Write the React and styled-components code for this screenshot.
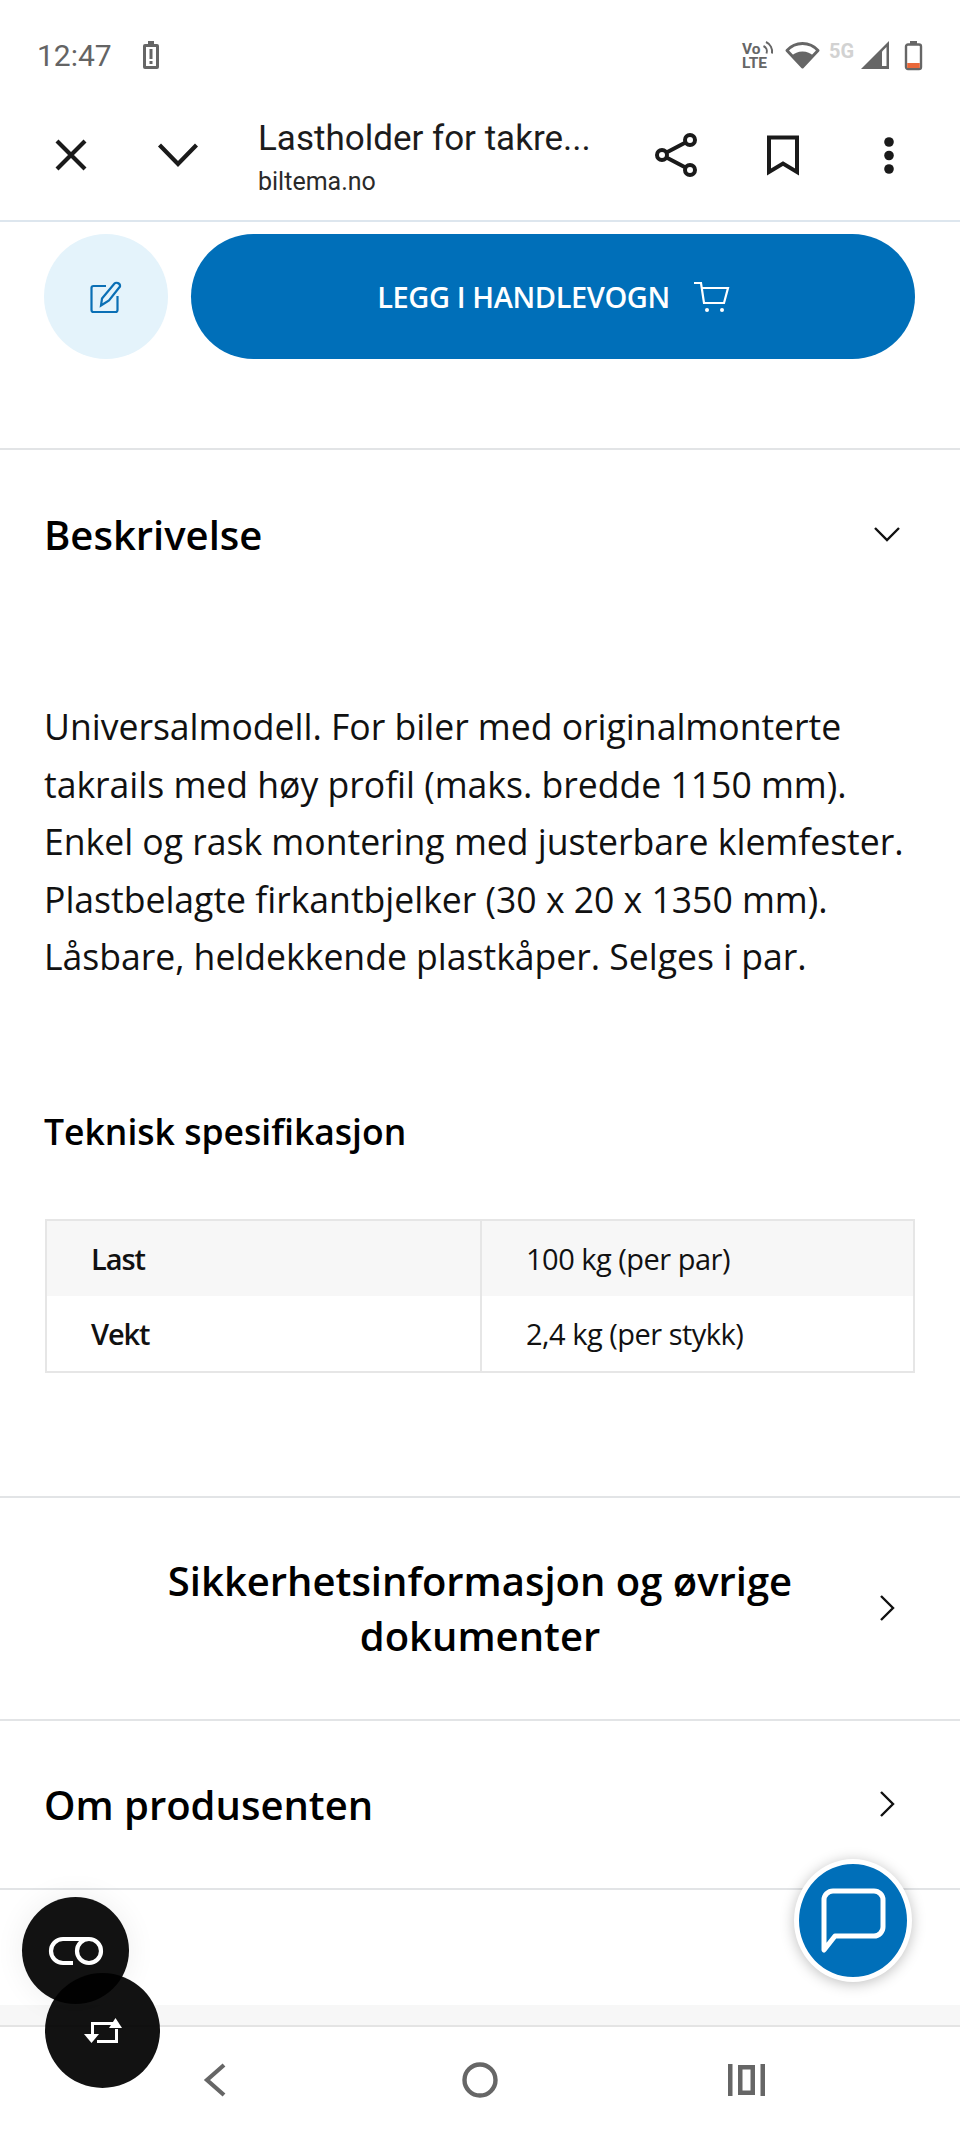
import React from "react";
import styled, { createGlobalStyle } from "styled-components";

const Global = createGlobalStyle`
  html, body { margin: 0; padding: 0; background: #fff; }
  body { width: 960px; height: 2133px; overflow: hidden; }
  * { box-sizing: border-box; }
  svg { display: block; overflow: visible; }
`;

const Phone = styled.div`
  position: relative;
  width: 960px;
  height: 2133px;
  overflow: hidden;
  background: #fff;
  display: flex;
  flex-direction: column;
  font-family: "Open Sans", "Noto Sans", sans-serif;
  color: #000;
`;

const StatusBar = styled.div`
  height: 108px;
  flex: none;
  padding: 41px 38px 0 37px;
  display: flex;
  justify-content: space-between;
  align-items: flex-start;
`;
const StatusGroup = styled.div`
  display: flex;
  align-items: flex-start;
`;
const StatusItem = styled.div`
  flex: none;
  margin-left: ${p => p.$ml || 0}px;
  margin-top: ${p => p.$mt || 0}px;
`;
const Clock = styled.span`
  font: 400 30px/30px Roboto, sans-serif;
  color: #646464;
`;
const FiveG = styled.span`
  display: block;
  width: 26px;
  font: 700 20px/18px Roboto, sans-serif;
  color: #d2d2d2;
  white-space: nowrap;
`;
const Toolbar = styled.div`
  height: 114px;
  flex: none;
  display: flex;
  align-items: center;
  padding-bottom: 18px;
  border-bottom: 2px solid #dde6ee;
`;
const ToolSlot = styled.div`
  flex: none;
  width: ${p => p.$w}px;
  display: flex;
  justify-content: center;
`;
const TitleBlock = styled.div`
  flex: none;
  width: 375px;
  display: flex;
  flex-direction: column;
  gap: 7px;
  margin-top: 4px;
`;
const Title = styled.div`
  font: 400 35px/42px Roboto, sans-serif;
  color: #1c1c1c;
  white-space: nowrap;
`;
const Url = styled.div`
  font: 400 25px/30px Roboto, sans-serif;
  color: #2a2a2a;
`;
const ActionRow = styled.div`
  flex: none;
  display: flex;
  gap: 23px;
  padding: 12px 45px 89px 44px;
`;
const EditButton = styled.div`
  width: 124px;
  height: 125px;
  flex: none;
  border-radius: 50%;
  background: #e4f3fb;
  display: flex;
  align-items: center;
  justify-content: center;
`;
const CartButton = styled.div`
  flex: 1;
  height: 125px;
  border-radius: 63px;
  background: #006fb9;
  display: flex;
  align-items: center;
  justify-content: center;
  gap: 24px;
  color: #fff;
  font-weight: 600;
  font-size: 29px;
  letter-spacing: -0.4px;
`;
const Rule = styled.div`
  height: 2px;
  flex: none;
  background: #e2e4e6;
`;
const SectionHead = styled.div`
  flex: none;
  height: ${p => p.$h}px;
  padding: 0 60px 0 44px;
  display: flex;
  align-items: center;
  gap: 20px;
`;
const HeadText = styled.h2`
  margin: 0 0 0 ${p => (p.$center ? 62 : 0)}px;
  flex: 1;
  font-size: 40px;
  line-height: 55px;
  font-weight: 600;
  text-align: ${p => (p.$center ? "center" : "left")};
`;
const Chevron = styled.svg`
  flex: none;
  width: 26px;
  height: 26px;
  fill: none;
  stroke: #111;
  stroke-width: 2.4;
`;
const Description = styled.p`
  margin: 80px 0 0;
  padding: 0 44px;
  flex: none;
  font-size: 35.6px;
  line-height: 57.6px;
  letter-spacing: -0.02px;
  color: #111;
  white-space: nowrap;
`;
const SpecTitle = styled.h3`
  margin: 116px 0 0;
  padding: 0 44px;
  flex: none;
  font-size: 35.5px;
  line-height: 58px;
  font-weight: 600;
`;
const Table = styled.div`
  flex: none;
  margin: 59px 45px 0;
  border: 2px solid #e6e6e6;
  display: grid;
  grid-template-columns: 433px 1fr;
`;
const Cell = styled.div`
  height: 75px;
  display: flex;
  align-items: center;
  padding-left: 44px;
  background: ${p => (p.$shade ? "#f7f7f7" : "#fff")};
  border-left: ${p => (p.$value ? "2px solid #e6e6e6" : "none")};
  font-size: 29px;
  font-weight: ${p => (p.$value ? 400 : 600)};
  letter-spacing: ${p => (p.$value ? -0.5 : -1.1)}px;
  color: #111;
`;
const Spacer = styled.div`
  flex: none;
  height: ${p => p.$h}px;
`;
const Band = styled.div`
  flex: none;
  height: 22px;
  background: #f7f7f7;
  border-bottom: 2px solid #e4e4e4;
`;
const NavBar = styled.div`
  flex: 1;
  display: flex;
  align-items: center;
  justify-content: center;
`;
const NavSlot = styled.div`
  flex: none;
  width: 266px;
  display: flex;
  justify-content: center;
`;
const Fab = styled.div`
  position: absolute;
  left: ${p => p.$left}px;
  top: ${p => p.$top}px;
  width: ${p => p.$size}px;
  height: ${p => p.$size}px;
  border-radius: 50%;
  background: rgba(0, 0, 0, 0.93);
  display: flex;
  align-items: center;
  justify-content: center;
  box-shadow: ${p => (p.$shadow ? "0 0 30px rgba(0,0,0,0.07)" : "none")};
`;
const ChatFab = styled.div`
  position: absolute;
  left: 794px;
  top: 1859px;
  width: 118px;
  height: 123px;
  border-radius: 50%;
  background: #006fb9;
  border: 5px solid #fff;
  box-shadow: 0 2px 14px rgba(0, 0, 0, 0.25);
  display: flex;
  align-items: center;
  justify-content: center;
`;

const ChevronDown = () => (
  <Chevron viewBox="0 0 26 26"><path d="M1 7l12 12L25 7" /></Chevron>
);
const ChevronRight = () => (
  <Chevron viewBox="0 0 26 26"><path d="M7 1l12 12L7 25" /></Chevron>
);

const BatteryAlert = () => (
  <svg width="16" height="28" viewBox="0 0 16 28">
    <rect x="5" y="0" width="6" height="4" fill="#666" />
    <rect x="0" y="3" width="16" height="25" rx="2" fill="#666" />
    <rect x="3" y="6" width="10" height="19" fill="#fff" />
    <rect x="6.5" y="8" width="3" height="10" fill="#666" />
    <rect x="6.5" y="20" width="3" height="3" fill="#666" />
  </svg>
);
const VoLte = () => (
  <svg width="31" height="28" viewBox="0 0 31 28">
    <text x="0" y="13" fontFamily="Roboto, sans-serif" fontWeight="700" fontSize="15.500" fill="#666">Vo</text>
    <text x="0" y="27" fontFamily="Roboto, sans-serif" fontWeight="700" fontSize="15.500" fill="#666">LTE</text>
    <path d="M21.500 5a6 6 0 0 1 3 7.500M24 1a11 11 0 0 1 6 11.500" stroke="#666" strokeWidth="2" fill="none" />
  </svg>
);
const Wifi = () => (
  <svg width="35" height="28" viewBox="0 0 35 28">
    <path d="M17.500 26 2 9.500C6 5 11 2.500 17.500 2.500S29 5 33 9.500Z" fill="none" stroke="#666" strokeWidth="3" strokeLinejoin="round" />
    <path d="M17.500 27 6.500 15c3-3 6.500-4.500 11-4.500s8 1.500 11 4.500Z" fill="#666" />
  </svg>
);
const Signal = () => (
  <svg width="29" height="28" viewBox="0 0 29 28">
    <path d="M0 28 28 0v28Z" fill="#666" />
    <path d="M21 10.500 25.500 6v19H21Z" fill="#fff" />
  </svg>
);
const Battery = () => (
  <svg width="17" height="29" viewBox="0 0 17 29">
    <rect x="5" y="0" width="7" height="4" fill="#666" />
    <rect x="1" y="3.500" width="15" height="24.500" rx="2" fill="#fff" stroke="#666" strokeWidth="2.400" />
    <rect x="2.200" y="22" width="12.600" height="5" fill="#e9683a" />
  </svg>
);
const Close = () => (
  <svg width="32" height="32" viewBox="0 0 32 32" fill="none" stroke="#1a1a1a" strokeWidth="4.200">
    <path d="M2 2l28 28M30 2 2 30" />
  </svg>
);
const CollapseChevron = () => (
  <svg width="40" height="24" viewBox="0 0 40 24" fill="none" stroke="#1a1a1a" strokeWidth="4.200">
    <path d="M1.500 2 20 21 38.500 2" />
  </svg>
);
const Share = () => (
  <svg width="42" height="44" viewBox="0 0 42 44" fill="none" stroke="#1a1a1a" strokeWidth="4">
    <circle cx="35" cy="7" r="5" />
    <circle cx="7" cy="22" r="5" />
    <circle cx="35" cy="37" r="5" />
    <path d="M11.500 19.500 30.500 9.500M11.500 24.500l19 10" />
  </svg>
);
const Bookmark = () => (
  <svg width="32" height="41" viewBox="0 0 32 41" fill="none" stroke="#1a1a1a" strokeWidth="4">
    <path d="M2 2.500h28V37L16 28.500 2 37Z" />
  </svg>
);
const Dots = () => (
  <svg width="10" height="37" viewBox="0 0 10 37" fill="#1a1a1a">
    <circle cx="5" cy="5" r="4.800" />
    <circle cx="5" cy="18.500" r="4.800" />
    <circle cx="5" cy="32" r="4.800" />
  </svg>
);
const EditIcon = () => (
  <svg width="32" height="32" viewBox="0 0 32 32" fill="none" stroke="#0a6fb5" strokeWidth="2.200">
    <path d="M16 5H3.500A2 2 0 0 0 1.500 7v22a2 2 0 0 0 2 2h22a2 2 0 0 0 2-2V15" />
    <path d="M11 24.500l1-7L24.500 2.500c1.500-1.500 6-.5 5.500 3L19 19.500Z" />
  </svg>
);
const CartIcon = () => (
  <svg width="35" height="32" viewBox="0 0 35 32" fill="none" stroke="#fff" strokeWidth="2.200">
    <path d="M0 2h7l3 20h20l4-15H8" />
    <circle cx="13" cy="29" r="2" fill="#fff" stroke="none" />
    <circle cx="28" cy="29" r="2" fill="#fff" stroke="none" />
  </svg>
);
const ToggleIcon = () => (
  <svg width="54" height="28" viewBox="0 0 54 28" fill="none" stroke="#fff" strokeWidth="4.200">
    <path d="M24 26H14a12 12 0 0 1 0-24h26a12 12 0 0 1 0 24 12 12 0 0 1-12-12A12 12 0 0 1 40 2" />
  </svg>
);
const SwapIcon = () => (
  <svg width="38" height="30" viewBox="0 0 38 30" fill="#fff">
    <path d="M7 6h22v3H10v11H7Z" />
    <path d="M0 18h15l-7.500 9Z" />
    <path d="M31 24H13v3h21V13h-3Z" />
    <path d="M25 12h13L31.500 2Z" />
  </svg>
);
const ChatIcon = () => (
  <svg width="64" height="66" viewBox="0 0 64 66" fill="none" stroke="#fff" strokeWidth="5" strokeLinejoin="round">
    <path d="M3 62V12a9 9 0 0 1 9-9h41a9 9 0 0 1 9 9v27a9 9 0 0 1-9 9H14Z" />
  </svg>
);
const NavBack = () => (
  <svg width="22" height="34" viewBox="0 0 22 34" fill="none" stroke="#666" strokeWidth="4.200">
    <path d="M21 2 4 17l17 15" />
  </svg>
);
const NavHome = () => (
  <svg width="36" height="36" viewBox="0 0 36 36" fill="none" stroke="#666" strokeWidth="4.400">
    <circle cx="18" cy="18" r="15.500" />
  </svg>
);
const NavRecent = () => (
  <svg width="37" height="32" viewBox="0 0 37 32" fill="#666">
    <rect x="0" y="0" width="4.500" height="32" />
    <rect x="32.500" y="0" width="4.500" height="32" />
    <path fillRule="evenodd" d="M10 1h17v30H10ZM14.500 5.500v21h8v-21Z" />
  </svg>
);

export default function App() {
  return (
    <Phone>
      <Global />
      <StatusBar>
        <StatusGroup>
          <Clock>12:47</Clock>
          <StatusItem $ml={31}><BatteryAlert /></StatusItem>
        </StatusGroup>
        <StatusGroup>
          <VoLte />
          <StatusItem $ml={12}><Wifi /></StatusItem>
          <StatusItem $ml={9} $mt={1}><FiveG>5G</FiveG></StatusItem>
          <StatusItem $ml={6}><Signal /></StatusItem>
          <StatusItem $ml={15}><Battery /></StatusItem>
        </StatusGroup>
      </StatusBar>
      <Toolbar>
        <ToolSlot $w={142}><Close /></ToolSlot>
        <ToolSlot $w={72}><CollapseChevron /></ToolSlot>
        <ToolSlot $w={44} />
        <TitleBlock>
          <Title>Lastholder for takre...</Title>
          <Url>biltema.no</Url>
        </TitleBlock>
        <ToolSlot $w={86}><Share /></ToolSlot>
        <ToolSlot $w={127}><Bookmark /></ToolSlot>
        <ToolSlot $w={86}><Dots /></ToolSlot>
      </Toolbar>
      <ActionRow>
        <EditButton><EditIcon /></EditButton>
        <CartButton>LEGG I HANDLEVOGN <CartIcon /></CartButton>
      </ActionRow>
      <Rule />
      <SectionHead $h={168}>
        <HeadText>Beskrivelse</HeadText>
        <ChevronDown />
      </SectionHead>
      <Description>
        Universalmodell. For biler med originalmonterte<br />
        takrails med høy profil (maks. bredde 1150 mm).<br />
        Enkel og rask montering med justerbare klemfester.<br />
        Plastbelagte firkantbjelker (30 x 20 x 1350 mm).<br />
        Låsbare, heldekkende plastkåper. Selges i par.
      </Description>
      <SpecTitle>Teknisk spesifikasjon</SpecTitle>
      <Table>
        <Cell $shade>Last</Cell>
        <Cell $shade $value>100 kg (per par)</Cell>
        <Cell>Vekt</Cell>
        <Cell $value>2,4 kg (per stykk)</Cell>
      </Table>
      <Spacer $h={123} />
      <Rule />
      <SectionHead $h={221}>
        <HeadText $center>Sikkerhetsinformasjon og øvrige<br />dokumenter</HeadText>
        <ChevronRight />
      </SectionHead>
      <Rule />
      <SectionHead $h={167}>
        <HeadText>Om produsenten</HeadText>
        <ChevronRight />
      </SectionHead>
      <Rule />
      <Spacer $h={115} />
      <Band />
      <NavBar>
        <NavSlot><NavBack /></NavSlot>
        <NavSlot><NavHome /></NavSlot>
        <NavSlot><NavRecent /></NavSlot>
      </NavBar>
      <Fab $left={22} $top={1897} $size={107} $shadow><ToggleIcon /></Fab>
      <Fab $left={45} $top={1973} $size={115}><SwapIcon /></Fab>
      <ChatFab><ChatIcon /></ChatFab>
    </Phone>
  );
}
